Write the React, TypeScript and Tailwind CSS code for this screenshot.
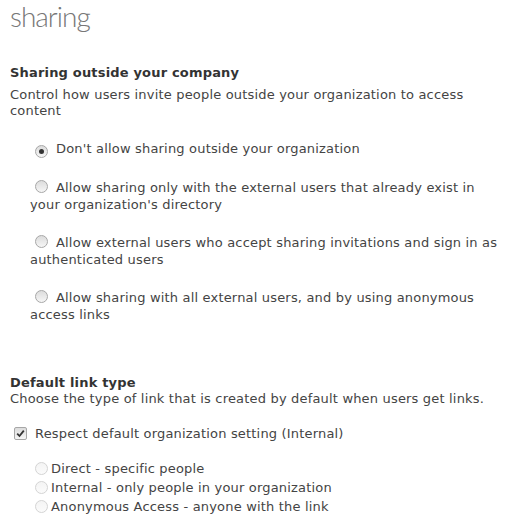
import React from "react";

function Radio({ checked = false, disabled = false }: { checked?: boolean; disabled?: boolean }) {
  return (
    <span
      className={
        "inline-flex items-center justify-center w-[13px] h-[13px] rounded-full border align-[-1px] " +
        (disabled
          ? "border-[#d4d4d4] bg-gradient-to-b from-[#f4f4f4] to-[#fbfbfb]"
          : "border-[#a7a7a7] bg-gradient-to-b from-[#dcdcdc] to-[#f6f6f6]")
      }
    >
      {checked ? <span className="block w-[5px] h-[5px] rounded-full bg-[#333]" /> : null}
    </span>
  );
}

function Checkbox() {
  return (
    <span className="inline-flex items-center justify-center w-[13px] h-[13px] rounded-[2px] border border-[#a7a7a7] bg-gradient-to-b from-[#dcdcdc] to-[#f6f6f6] align-[-1px]">
      <svg width="9" height="9" viewBox="0 0 9 9">
        <path d="M1.2 4.6 L3.5 7 L7.8 1.6" fill="none" stroke="#333" strokeWidth="1.8" />
      </svg>
    </span>
  );
}

const options = [
  { text: "Don't allow sharing outside your organization", checked: true },
  { text: "Allow sharing only with the external users that already exist in your organization's directory" },
  { text: "Allow external users who accept sharing invitations and sign in as authenticated users" },
  { text: "Allow sharing with all external users, and by using anonymous access links" },
];

const linkTypes = [
  "Direct - specific people",
  "Internal - only people in your organization",
  "Anonymous Access - anyone with the link",
];

export default function App() {
  return (
    <div className="w-[519px] h-[526px] bg-white px-[10px] font-['DejaVu_Sans',sans-serif] text-[13px] tracking-[0.18px] text-[#444] overflow-hidden">
      <h1 className="h-[40px] pt-[1px] leading-[30px] text-[28px] font-light tracking-[-1px] text-[#777] font-['Lato',sans-serif]">sharing</h1>

      <h2 className="mt-[25px] leading-[16px] font-bold text-[#333]">Sharing outside your company</h2>
      <p className="mt-[6px] leading-[16px] w-[475px]">
        Control how users invite people outside your organization to access content
      </p>

      <div className="mt-[21px] flex flex-col gap-[21px] pl-[20px] pr-[10px]">
        {options.map((o, i) => (
          <p key={i} className="leading-[17px]">
            <span className="ml-[5px] mr-[8px]">
              <Radio checked={o.checked} />
            </span>
            {o.text}
          </p>
        ))}
      </div>

      <h2 className="mt-[52px] leading-[16px] font-bold text-[#333]">Default link type</h2>
      <p className="leading-[16px]">Choose the type of link that is created by default when users get links.</p>

      <div className="mt-[18px] leading-[17px] flex items-center pl-[4px]">
        <Checkbox />
        <span className="ml-[8px]">Respect default organization setting (Internal)</span>
      </div>

      <div className="mt-[17px] flex flex-col pl-[25px]">
        {linkTypes.map((t) => (
          <div key={t} className="flex items-center h-[19px]">
            <Radio disabled />
            <span className="ml-[3px]">{t}</span>
          </div>
        ))}
      </div>
    </div>
  );
}
